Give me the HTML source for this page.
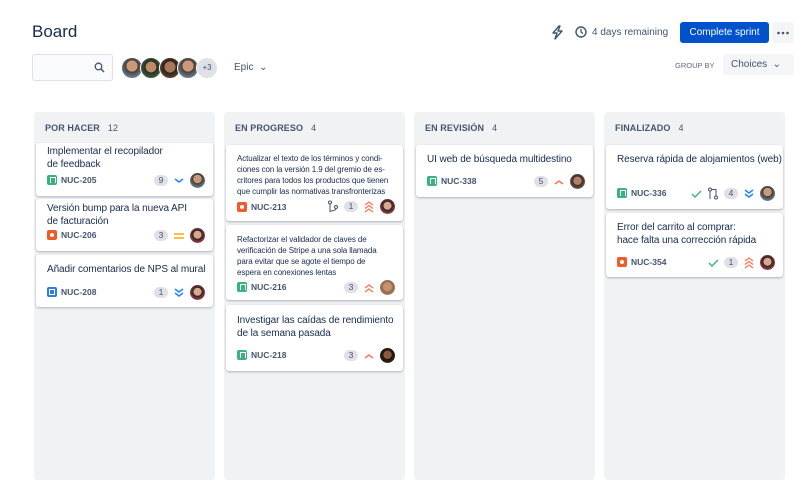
<!DOCTYPE html>
<html><head><meta charset="utf-8"><style>
*{box-sizing:border-box;margin:0;padding:0}
body{width:800px;height:493px;background:#fff;font-family:"Liberation Sans",sans-serif;color:#172b4d;position:relative;overflow:hidden}
.a{position:absolute;white-space:nowrap}
.col{position:absolute;top:112px;width:181px;height:368px;background:#f1f2f4;border-radius:4px}
.ch{position:absolute;left:11px;top:11px;font-size:9px;font-weight:bold;color:#44546f;letter-spacing:.1px}
.ch span{margin-left:8px;font-weight:normal}
.card{position:absolute;left:2px;width:177px;background:#fff;border-radius:3px;box-shadow:0 1px 2px rgba(9,30,66,.3)}
.t{position:absolute;left:11px;font-size:10px;line-height:13px;color:#172b4d;white-space:nowrap;letter-spacing:-.1px}
.ts{font-size:8px;line-height:11px;letter-spacing:-.1px}
.k{position:absolute;left:11px;font-size:8.5px;font-weight:bold;color:#44546f;display:flex;align-items:center}
.ic{width:10px;height:10px;border-radius:2px;margin-right:4px;display:inline-block;position:relative}
.st{background:#36b37e}.st:after{content:"";position:absolute;left:3px;top:2px;width:4px;height:5px;border:1px solid #fff;border-bottom:none}
.bug{background:#f15b29}.bug:after{content:"";position:absolute;left:3px;top:3px;width:4px;height:4px;border-radius:50%;background:#fff}
.tk{background:#2f7de1}.tk:after{content:"";position:absolute;left:2px;top:2px;width:4px;height:4px;border:1px solid #fff}
.r{position:absolute;right:8px;display:flex;align-items:center;gap:5px}
.n{background:#dfe1e6;border-radius:7px;font-size:8.5px;width:14px;height:11px;text-align:center;line-height:11px;color:#44546f}
.av{width:15px;height:15px;border-radius:50%;background:radial-gradient(circle at 50% 40%,#c99a7a 35%,#4a3a30 37%,#6b8aa5 80%)}
.av2{background:radial-gradient(circle at 50% 45%,#d8a88a 35%,#2a2220 37%,#c04a5a 85%)}
svg{display:block}
</style></head><body>
<div class="a" style="left:32px;top:22px;font-size:17px;color:#172b4d">Board</div>
<div class="a" style="left:32px;top:54px;width:81px;height:27px;border:1px solid #dfe1e6;border-radius:3px;background:#fafbfc"></div>
<svg class="a" style="left:94px;top:62px" width="11" height="11" viewBox="0 0 11 11"><circle cx="4.5" cy="4.5" r="3.3" fill="none" stroke="#44546f" stroke-width="1.3"/><path d="M7 7l3 3" stroke="#44546f" stroke-width="1.4"/></svg>
<div class="a av" style="left:121px;top:57px;width:22px;height:22px;border:1.5px solid #fff"></div>
<div class="a av" style="left:140px;top:57px;width:22px;height:22px;border:1.5px solid #fff;background:radial-gradient(circle at 50% 45%,#c08a68 35%,#2a2a25 37%,#3c6a3c 80%)"></div>
<div class="a av" style="left:159px;top:57px;width:22px;height:22px;border:1.5px solid #fff;background:radial-gradient(circle at 50% 45%,#a8785a 35%,#2a201a 40%,#6a4a3a 80%)"></div>
<div class="a av" style="left:177px;top:57px;width:22px;height:22px;border:1.5px solid #fff"></div>
<div class="a" style="left:196px;top:57px;width:22px;height:22px;border-radius:50%;background:#dfe1e6;border:1.5px solid #fff;font-size:8px;text-align:center;line-height:19px;color:#44546f">+3</div>
<div class="a" style="left:234px;top:62px;font-size:10px;color:#44546f">Epic &nbsp;⌄</div>
<svg class="a" style="left:551px;top:25px" width="13" height="15" viewBox="0 0 13 15"><path d="M8 1L2 8h4l-2 6 7-8H7l2-5z" fill="none" stroke="#44546f" stroke-width="1.4" stroke-linejoin="round"/></svg>
<svg class="a" style="left:575px;top:26px" width="12" height="12" viewBox="0 0 12 12"><circle cx="6" cy="6" r="5" fill="none" stroke="#44546f" stroke-width="1.4"/><path d="M6 3v3l2 1.5" fill="none" stroke="#44546f" stroke-width="1.3"/></svg>
<div class="a" style="left:592px;top:27px;font-size:10px;color:#44546f">4 days remaining</div>
<div class="a" style="left:680px;top:22px;width:89px;height:21px;background:#0052cc;border-radius:3px;color:#fff;font-size:10px;text-align:center;line-height:21px">Complete sprint</div>
<div class="a" style="left:772px;top:22px;width:22px;height:21px;background:#f4f5f7;border-radius:3px"><svg width="22" height="21"><circle cx="6.5" cy="11" r="1.3" fill="#44546f"/><circle cx="11" cy="11" r="1.3" fill="#44546f"/><circle cx="15.5" cy="11" r="1.3" fill="#44546f"/></svg></div>
<div class="a" style="left:675px;top:61px;font-size:7.5px;color:#5e6c84">GROUP BY</div>
<div class="a" style="left:723px;top:54px;width:71px;height:21px;background:#f4f5f7;border-radius:3px;font-size:10px;color:#44546f;line-height:21px;padding-left:8px">Choices &nbsp;⌄</div>

<div class="col" style="left:34px"><div class="ch">POR HACER<span>12</span></div>
<div class="card" style="top:31px;height:53px"><div class="t" style="top:2px">Implementar el recopilador<br>de feedback</div><div class="k" style="top:32px"><i class="ic st"></i>NUC-205</div><div class="r" style="top:30px"><span class="n">9</span><svg width="12" height="8" viewBox="0 0 12 8"><path d="M2 2l4 3 4-3" fill="none" stroke="#2684ff" stroke-width="1.6"/></svg><span class="av"></span></div></div>
<div class="card" style="top:87px;height:52px"><div class="t" style="top:3px">Versión bump para la nueva API<br>de facturación</div><div class="k" style="top:31px"><i class="ic bug"></i>NUC-206</div><div class="r" style="top:29px"><span class="n">3</span><svg width="12" height="8" viewBox="0 0 12 8"><path d="M1 2h10M1 6h10" stroke="#ffab00" stroke-width="1.6"/></svg><span class="av av2"></span></div></div>
<div class="card" style="top:143px;height:52px"><div class="t" style="top:8px">Añadir comentarios de NPS al mural</div><div class="k" style="top:32px"><i class="ic tk"></i>NUC-208</div><div class="r" style="top:30px"><span class="n">1</span><svg width="12" height="10" viewBox="0 0 12 10"><path d="M2 1l4 3 4-3M2 5l4 3 4-3" fill="none" stroke="#2684ff" stroke-width="1.5"/></svg><span class="av av2"></span></div></div>
</div>

<div class="col" style="left:224px"><div class="ch">EN PROGRESO<span>4</span></div>
<div class="card" style="top:33px;height:76px"><div class="t ts" style="top:8px">Actualizar el texto de los términos y condi-<br>ciones con la versión 1.9 del gremio de es-<br>critores para todos los productos que tienen<br>que cumplir las normativas transfronterizas</div><div class="k" style="top:57px"><i class="ic bug"></i>NUC-213</div><div class="r" style="top:54px"><svg width="12" height="13" viewBox="0 0 12 13"><circle cx="3" cy="2.5" r="1.5" fill="none" stroke="#44546f"/><circle cx="9" cy="7" r="1.5" fill="none" stroke="#44546f"/><path d="M3 4v8M9 8.5c0 3-6 2-6 3" fill="none" stroke="#44546f"/></svg><span class="n">1</span><svg width="12" height="13" viewBox="0 0 12 13"><path d="M2 5l4-3 4 3M2 8.5l4-3 4 3M2 12l4-3 4 3" fill="none" stroke="#ff7452" stroke-width="1.3"/></svg><span class="av av2"></span></div></div>
<div class="card" style="top:113px;height:75px"><div class="t ts" style="top:9px">Refactorizar el validador de claves de<br>verificación de Stripe a una sola llamada<br>para evitar que se agote el tiempo de<br>espera en conexiones lentas</div><div class="k" style="top:57px"><i class="ic st"></i>NUC-216</div><div class="r" style="top:55px"><span class="n">3</span><svg width="12" height="10" viewBox="0 0 12 10"><path d="M2 5l4-3 4 3M2 9l4-3 4 3" fill="none" stroke="#ff7452" stroke-width="1.4"/></svg><span class="av" style="background:radial-gradient(circle at 50% 45%,#c89070 35%,#8a6a4a 50%,#b09070 85%)"></span></div></div>
<div class="card" style="top:193px;height:66px"><div class="t" style="top:9px">Investigar las caídas de rendimiento<br>de la semana pasada</div><div class="k" style="top:45px"><i class="ic st"></i>NUC-218</div><div class="r" style="top:43px"><span class="n">3</span><svg width="12" height="8" viewBox="0 0 12 8"><path d="M2 6l4-3 4 3" fill="none" stroke="#ff7452" stroke-width="1.5"/></svg><span class="av" style="background:radial-gradient(circle at 50% 45%,#8a5a3a 35%,#1a1410 40%,#3a2a20 85%)"></span></div></div>
</div>

<div class="col" style="left:414px"><div class="ch">EN REVISIÓN<span>4</span></div>
<div class="card" style="top:33px;height:52px"><div class="t" style="top:8px">UI web de búsqueda multidestino</div><div class="k" style="top:31px"><i class="ic st"></i>NUC-338</div><div class="r" style="top:29px"><span class="n">5</span><svg width="12" height="8" viewBox="0 0 12 8"><path d="M2 6l4-3 4 3" fill="none" stroke="#ff7452" stroke-width="1.5"/></svg><span class="av" style="background:radial-gradient(circle at 50% 45%,#b08068 35%,#3a2a22 40%,#8a6a5a 85%)"></span></div></div>
</div>

<div class="col" style="left:604px"><div class="ch">FINALIZADO<span>4</span></div>
<div class="card" style="top:33px;height:64px"><div class="t" style="top:8px">Reserva rápida de alojamientos (web)</div><div class="k" style="top:43px"><i class="ic st"></i>NUC-336</div><div class="r" style="top:41px"><svg width="12" height="10" viewBox="0 0 12 10"><path d="M2 5l3 3 6-6" fill="none" stroke="#36b37e" stroke-width="1.4"/></svg><svg width="12" height="13" viewBox="0 0 12 13"><circle cx="3" cy="2.5" r="1.5" fill="none" stroke="#44546f"/><circle cx="9" cy="10.5" r="1.5" fill="none" stroke="#44546f"/><path d="M3 4v8M5 2.5h4v6.5" fill="none" stroke="#44546f"/></svg><span class="n">4</span><svg width="12" height="10" viewBox="0 0 12 10"><path d="M2 1l4 3 4-3M2 5l4 3 4-3" fill="none" stroke="#2684ff" stroke-width="1.5"/></svg><span class="av"></span></div></div>
<div class="card" style="top:101px;height:64px"><div class="t" style="top:8px">Error del carrito al comprar:<br>hace falta una corrección rápida</div><div class="k" style="top:44px"><i class="ic bug"></i>NUC-354</div><div class="r" style="top:42px"><svg width="12" height="10" viewBox="0 0 12 10"><path d="M2 5l3 3 6-6" fill="none" stroke="#36b37e" stroke-width="1.4"/></svg><span class="n">1</span><svg width="12" height="13" viewBox="0 0 12 13"><path d="M2 5l4-3 4 3M2 8.5l4-3 4 3M2 12l4-3 4 3" fill="none" stroke="#ff7452" stroke-width="1.3"/></svg><span class="av av2"></span></div></div>
</div>
</body></html>
